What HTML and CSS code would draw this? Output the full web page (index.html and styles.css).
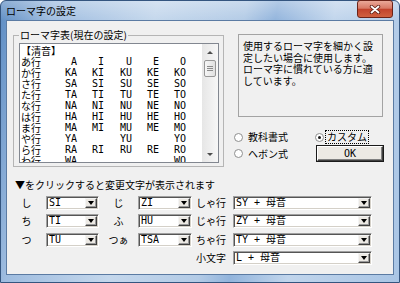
FILE: index.html
```html
<!DOCTYPE html>
<html lang="ja">
<head>
<meta charset="UTF-8">
<meta name="viewport" content="width=device-width, initial-scale=1.0">
<title>ローマ字の設定</title>
<link rel="stylesheet" href="styles.css">
</head>
<body>
<div class="window">
<div class="title-bar">
<span class="title">ローマ字の設定</span>
<div class="close-btn">
<svg width="12" height="9" viewBox="0 0 12 9">
<path d="M2.5 1.5 L9.5 7.5 M9.5 1.5 L2.5 7.5" stroke="#5a1d14" stroke-width="3.4" stroke-linecap="round"/>
<path d="M2.5 1.5 L9.5 7.5 M9.5 1.5 L2.5 7.5" stroke="#fff" stroke-width="1.8" stroke-linecap="round"/>
</svg>
</div>
</div>
<div class="client">
<div class="top">
<fieldset class="group">
<legend>ローマ字表(現在の設定)</legend>
<div class="listbox">
<div class="list-items">
<div class="row"><span class="head">【清音】</span></div>
<div class="row"><span>あ行</span><span>A</span><span>I</span><span>U</span><span>E</span><span>O</span></div>
<div class="row"><span>か行</span><span>KA</span><span>KI</span><span>KU</span><span>KE</span><span>KO</span></div>
<div class="row"><span>さ行</span><span>SA</span><span>SI</span><span>SU</span><span>SE</span><span>SO</span></div>
<div class="row"><span>た行</span><span>TA</span><span>TI</span><span>TU</span><span>TE</span><span>TO</span></div>
<div class="row"><span>な行</span><span>NA</span><span>NI</span><span>NU</span><span>NE</span><span>NO</span></div>
<div class="row"><span>は行</span><span>HA</span><span>HI</span><span>HU</span><span>HE</span><span>HO</span></div>
<div class="row"><span>ま行</span><span>MA</span><span>MI</span><span>MU</span><span>ME</span><span>MO</span></div>
<div class="row"><span>や行</span><span>YA</span><span></span><span>YU</span><span></span><span>YO</span></div>
<div class="row"><span>ら行</span><span>RA</span><span>RI</span><span>RU</span><span>RE</span><span>RO</span></div>
<div class="row"><span>わ行</span><span>WA</span><span></span><span></span><span></span><span>WO</span></div>
<div class="row"><span>ん</span><span>NN</span></div>
</div>
<div class="scrollbar">
<div class="arrow arrow-up"></div>
<div class="thumb"><i></i><i></i><i></i></div>
<div class="arrow arrow-down"></div>
</div>
</div>
</fieldset>
<div class="side">
<div class="desc">使用するローマ字を細かく設定したい場合に使用します。ローマ字に慣れている方に適しています。</div>
<div class="options">
<label class="radio"><span class="circle"></span>教科書式</label>
<label class="radio"><span class="circle checked"></span><span class="focus">カスタム</span></label>
<label class="radio"><span class="circle"></span>ヘボン式</label>
<button class="ok-btn">OK</button>
</div>
</div>
</div>
<div class="hint">▼をクリックすると変更文字が表示されます</div>
<div class="combos">
<span class="lbl">し</span>
<div class="combo"><span class="value">SI</span><span class="drop"></span></div>
<span class="lbl">じ</span>
<div class="combo"><span class="value">ZI</span><span class="drop"></span></div>
<span class="lbl lbl-right">しゃ行</span>
<div class="combo"><span class="value">SY + 母音</span><span class="drop"></span></div>

<span class="lbl">ち</span>
<div class="combo"><span class="value">TI</span><span class="drop"></span></div>
<span class="lbl">ふ</span>
<div class="combo"><span class="value">HU</span><span class="drop"></span></div>
<span class="lbl lbl-right">じゃ行</span>
<div class="combo"><span class="value">ZY + 母音</span><span class="drop"></span></div>

<span class="lbl">つ</span>
<div class="combo"><span class="value">TU</span><span class="drop"></span></div>
<span class="lbl">つぁ</span>
<div class="combo"><span class="value">TSA</span><span class="drop"></span></div>
<span class="lbl lbl-right">ちゃ行</span>
<div class="combo"><span class="value">TY + 母音</span><span class="drop"></span></div>

<span class="lbl lbl-right small-col">小文字</span>
<div class="combo"><span class="value">L + 母音</span><span class="drop"></span></div>
</div>
</div>
</div>
</body>
</html>
```

FILE: styles.css
```css
* {
    box-sizing: border-box;
}

body {
    margin: 0;
    font-family: "Noto Sans CJK JP", sans-serif;
    font-size: 10px;
    color: #000;
}

/* marco de la ventana (estilo Vista) */
.window {
    width: 400px;
    height: 283px;
    display: flex;
    flex-direction: column;
    padding: 0 6px 8px;
    border: 1px solid #34557f;
    border-radius: 6px 6px 0 0;
    background:
        linear-gradient(180deg, rgba(255, 255, 255, 0.3) 0, rgba(255, 255, 255, 0) 20px),
        linear-gradient(100deg, #5d8cc3 0%, #9fbde0 12%, #c4d7ec 35%, #b3cbe6 55%, #92b4dc 62%, #c1d5ec 75%, #a9c5e5 100%);
}

.title-bar {
    height: 20px;
    display: flex;
    align-items: center;
}

.title {
    margin-left: -1px;
    line-height: 12px;
}

.close-btn {
    margin-left: auto;
    align-self: flex-start;
    margin-top: -1px;
    width: 36px;
    height: 18px;
    border: 1px solid #6b2318;
    border-radius: 3px;
    background: linear-gradient(#eaa898 0%, #d87a66 45%, #c2432c 52%, #d0603f 100%);
    display: flex;
    align-items: center;
    justify-content: center;
}

.client {
    flex: 1;
    background: #f0f0f0;
    box-shadow: 0 0 0 1px #5b7ba3;
}

.top {
    display: flex;
    align-items: flex-start;
    gap: 14px;
    padding: 8px 0 0 6px;
}

.group {
    margin: 0;
    padding: 0 4px 3px 5px;
    width: 211px;
    min-width: 0;
    border: 1px solid #b5b5b5;
}

.group legend {
    padding: 0 1px;
    line-height: 12px;
}

.listbox {
    margin-top: 2px;
    height: 120px;
    display: flex;
    background: #fff;
    border: 1px solid #828790;
    overflow: hidden;
}

.list-items {
    flex: 1;
    padding: 1px 0 0 1px;
    overflow: hidden;
}

.row {
    display: grid;
    grid-template-columns: 30px 26px 27px 28px 27px 27px;
    height: 11px;
    line-height: 11px;
    white-space: nowrap;
}

.row span + span {
    text-align: right;
    font-family: "DejaVu Sans Mono", monospace;
}

.row .head {
    grid-column: 1 / 4;
}

.scrollbar {
    width: 16px;
    display: flex;
    flex-direction: column;
    align-items: center;
    background: linear-gradient(to right, #e6e6e6, #f7f7f7);
}

.arrow {
    height: 16px;
    width: 100%;
    display: flex;
    align-items: center;
    justify-content: center;
}

.arrow-up::after {
    content: "";
    border-left: 3px solid transparent;
    border-right: 3px solid transparent;
    border-bottom: 3px solid #4d4d4d;
}

.arrow-down {
    margin-top: auto;
}

.arrow-down::after {
    content: "";
    border-left: 3px solid transparent;
    border-right: 3px solid transparent;
    border-top: 3px solid #4d4d4d;
}

.thumb {
    width: 12px;
    height: 17px;
    border: 1px solid #979797;
    border-radius: 2px;
    background: linear-gradient(to right, #f6f6f6, #e0e0e0);
    display: flex;
    flex-direction: column;
    align-items: center;
    justify-content: center;
    gap: 1px;
}

.thumb i {
    width: 6px;
    height: 1px;
    background: #8a8a8a;
}

.side {
    width: 145px;
    padding-top: 5px;
}

.desc {
    height: 83px;
    padding: 5px 8px 0 4px;
    border: 1px solid #a3a3a3;
    line-height: 11.5px;
}

.options {
    display: grid;
    grid-template-columns: 81px 70px;
    grid-template-rows: 12px 15px;
    row-gap: 3px;
    margin: 14px 0 0 -4px;
}

.radio {
    display: flex;
    align-items: center;
    gap: 5px;
    line-height: 12px;
}

.circle {
    width: 9px;
    height: 9px;
    border-radius: 50%;
    border: 1px solid #8e8f8f;
    background: #fff;
    display: flex;
    align-items: center;
    justify-content: center;
}

.circle.checked::after {
    content: "";
    width: 3px;
    height: 3px;
    border-radius: 50%;
    background: #1a1a1a;
}

.radio .focus {
    margin-left: -4px;
    padding: 0 1px;
    border: 1px dotted #000;
}

.ok-btn {
    margin-left: 2px;
    width: 66px;
    height: 15px;
    padding: 0;
    font-family: "DejaVu Sans Mono", monospace;
    font-size: 10px;
    line-height: 11px;
    background: #ece9e4;
    border: 1px solid;
    border-color: #fff #404040 #404040 #fff;
    box-shadow: inset -1px -1px #808080, 0 0 0 1px #1a1a1a;
}

.hint {
    margin: 12px 0 0 8px;
    line-height: 12px;
}

.combos {
    display: grid;
    grid-template-columns: 39px 53px 39px 54px 41px 139px;
    grid-auto-rows: 14px;
    row-gap: 4.67px;
    margin-top: 4.5px;
    align-items: center;
}

.lbl {
    text-align: center;
    line-height: 14px;
    white-space: nowrap;
}

.lbl-right {
    text-align: right;
    padding-right: 7px;
}

.small-col {
    grid-column: 5;
}

.combo {
    height: 14px;
    display: flex;
    padding: 1px;
    background: #fff;
    border: 1px solid;
    border-color: #a0a0a0 #fff #fff #a0a0a0;
    box-shadow: inset 1px 1px #555, inset -1px -1px #d4d0c8;
}

.combo .value {
    flex: 1;
    padding-left: 1px;
    font-family: "DejaVu Sans Mono", "Noto Sans CJK JP", monospace;
    line-height: 10px;
    white-space: pre;
}

.combo .drop {
    width: 12px;
    height: 10px;
    display: flex;
    align-items: center;
    justify-content: center;
    background: #ece9e4;
    border: 1px solid;
    border-color: #f4f4f4 #404040 #404040 #f4f4f4;
    box-shadow: inset -1px -1px #9a9a9a;
}

.combo .drop::after {
    content: "";
    border-left: 3.5px solid transparent;
    border-right: 3.5px solid transparent;
    border-top: 4px solid #000;
}
```
